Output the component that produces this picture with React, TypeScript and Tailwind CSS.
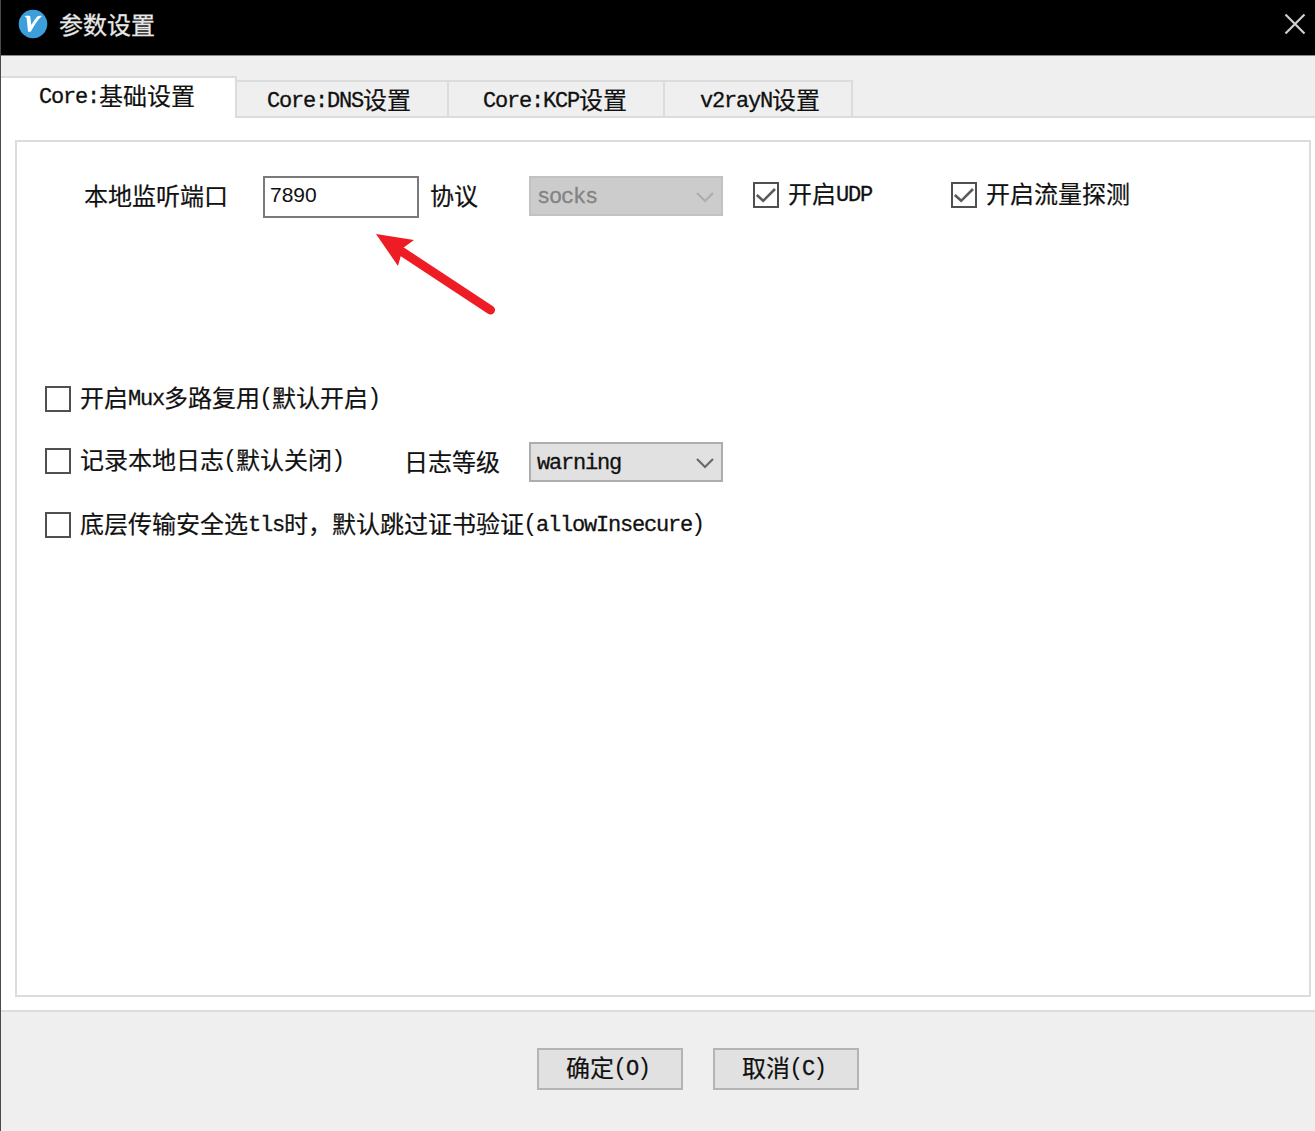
/**
 * Settings window - core, DNS, KCP and client options
 */

import React, { useState } from 'react';

const TABS = [
  { id: 'core', label: 'Core:基础设置', className: 'w-[213px] pl-[32px]' },
  { id: 'dns', label: 'Core:DNS设置', className: 'w-[212px] pl-[30px]' },
  { id: 'kcp', label: 'Core:KCP设置', className: 'w-[216px] pl-[34px]' },
  { id: 'app', label: 'v2rayN设置', className: 'w-[188px] pl-[35px]' },
];

const runClass = (run: string) => {
  if (/^[()]/.test(run)) return 'text-[24px] tracking-[-2.4px] -ml-[1px] mr-[1px]';
  if (/^[\x21-\x7e]/.test(run)) return 'relative top-[1px] text-[22px] tracking-[-1.2px] [-webkit-text-stroke:0.3px]';
  return 'relative top-[2px] [-webkit-text-stroke:0.2px]';
};

// Latin runs take exactly half the width of a Chinese character
const Label: React.FC<{ text: string; className?: string }> = ({ text, className = '' }) => (
  <span className={`flex items-center h-6 text-2xl leading-6 whitespace-nowrap ${className}`}>
    {text.split(/([()]|[\x21-\x27\x2a-\x7e]+)/).filter(Boolean).map((run, i) => (
      <span key={i} className={runClass(run)}>
        {run}
      </span>
    ))}
  </span>
);

interface CheckBoxProps {
  label: string;
  defaultChecked?: boolean;
  className?: string;
}

const CheckBox: React.FC<CheckBoxProps> = ({ label, defaultChecked = false, className = '' }) => {
  const [checked, setChecked] = useState(defaultChecked);

  return (
    <button
      type="button"
      role="checkbox"
      aria-checked={checked}
      onClick={() => setChecked(!checked)}
      className={`flex items-center shrink-0 gap-[9px] ${className}`}
    >
      <span className="w-[26px] h-[26px] shrink-0 border-2 border-[#505050] bg-white">
        {checked && (
          <svg viewBox="0 0 22 22" className="w-[22px] h-[22px]" fill="none" stroke="#5a5a5a" strokeWidth="2.6">
            <path d="M1.8 11 8.2 16.8 20 5" />
          </svg>
        )}
      </span>
      <Label text={label} />
    </button>
  );
};

const Combo: React.FC<{ value: string; disabled?: boolean; className?: string }> = ({ value, disabled, className = '' }) => (
  <button
    type="button"
    disabled={disabled}
    className={`flex items-center justify-between shrink-0 w-[194px] h-[40px] border-2 pl-[6px] pr-[6px] ${
      disabled ? 'bg-[#cccccc] border-[#c2c2c2] text-[#838383]' : 'bg-[#e1e1e1] border-[#adadad] text-[#111]'
    } ${className}`}
  >
    <Label text={value} className="pt-[2px]" />
    <svg viewBox="0 0 20 12" className="w-[20px] h-[12px] mt-[2px]" fill="none" stroke={disabled ? '#adadad' : '#6a6a6a'} strokeWidth="2.2">
      <path d="M2 2 10 10 18 2" />
    </svg>
  </button>
);

const DialogButton: React.FC<{ label: string }> = ({ label }) => (
  <button type="button" className="flex items-start w-[146px] h-[42px] pt-[7px] pl-[27px] bg-[#e1e1e1] border-2 border-[#b4b4b4]">
    <Label text={label} />
  </button>
);

export default function App() {
  const [tab, setTab] = useState('core');
  const [port, setPort] = useState('7890');

  return (
    <div className="relative flex flex-col w-[1315px] h-[1131px] overflow-hidden bg-[#efefef] border-l border-[#4a4a4a] text-[#111] font-['Liberation_Mono','Noto_Sans_CJK_SC',monospace]">
      {/* Title bar */}
      <div className="flex items-center justify-between h-[56px] pl-[17px] pr-[7px] pb-[7px] bg-black border-b border-[#8a8a8a] -ml-px">
        <div className="flex items-center gap-[11px] pl-px">
          <svg viewBox="0 0 30 30" className="w-[30px] h-[30px]">
            <circle cx="15" cy="15" r="14.3" fill="#3b9fdb" />
            <path d="M6.5 7.2 C8.5 6.7 11.5 6.7 12.2 7.3 L13.3 16 C16 11.5 18 8.5 19.3 7.4 C20.5 6.5 22.8 6.6 24 7 C20 10.3 15.8 17.3 12.7 22.8 L10 22.8 L8.7 9.5 C8.5 8.2 7.6 7.8 6.5 7.2Z" fill="#fff" />
          </svg>
          <h1 className="text-2xl leading-6 text-[#e8e8e8] [-webkit-text-stroke:0.3px] font-['Noto_Sans_CJK_SC',sans-serif]">参数设置</h1>
        </div>
        <button type="button" aria-label="close" className="pr-[2px]">
          <svg viewBox="0 0 22 22" className="w-[22px] h-[22px]" stroke="#d0d0d0" strokeWidth="2.2">
            <path d="M1.5 1.5 20.5 20.5M20.5 1.5 1.5 20.5" />
          </svg>
        </button>
      </div>

      {/* Tabs */}
      <div className="flex items-end shrink-0 h-[62px] border-b-2 border-[#dcdcdc]">
        {TABS.map((t) => (
          <button
            key={t.id}
            type="button"
            onClick={() => setTab(t.id)}
            className={`flex items-start shrink-0 box-border border-[#dcdcdc] ${
              t.id === tab
                ? 'h-[42px] -mb-[2px] bg-white border-t-2 border-r-2 pt-[7px] w-[236px] pl-[38px]'
                : `h-[36px] border-t-2 border-r-2 pt-[7px] ${t.className}`
            }`}
          >
            <Label text={t.label} />
          </button>
        ))}
      </div>

      {/* Tab page */}
      <div className="shrink-0 h-[894px] bg-white border-b-2 border-[#dcdcdc] pl-[14px] pr-[4px] pt-[22px] pb-[13px]">
        <div className="h-[857px] border-2 border-[#dcdcdc]">
          <div className="flex items-start h-[210px] pt-[34px] pl-[67px]">
            <Label text="本地监听端口" className="mt-[9px] w-[179px] shrink-0" />
            <input
              value={port}
              onChange={(e) => setPort(e.target.value)}
              className="w-[156px] h-[42px] shrink-0 border-2 border-[#7a7a7a] pl-[5px] pb-[4px] text-[21px] font-['Liberation_Sans',sans-serif] outline-none"
            />
            <Label text="协议" className="mt-[9px] ml-[11px] w-[99px] shrink-0" />
            <Combo value="socks" disabled />
            <CheckBox label="开启UDP" defaultChecked className="mt-[6px] ml-[30px] w-[198px]" />
            <CheckBox label="开启流量探测" defaultChecked className="mt-[6px]" />
          </div>

          <div className="flex flex-col pl-[28px]">
            <div className="flex items-center h-[94px]">
              <CheckBox label="开启Mux多路复用(默认开启)" />
            </div>
            <div className="flex items-start h-[66px] -mt-[4px]">
              <CheckBox label="记录本地日志(默认关闭)" className="mt-[6px] w-[359px]" />
              <Label text="日志等级" className="mt-[9px] w-[125px] shrink-0" />
              <Combo value="warning" />
            </div>
            <CheckBox label="底层传输安全选tls时，默认跳过证书验证(allowInsecure)" className="mt-[4px]" />
          </div>
        </div>
      </div>

      {/* Actions */}
      <div className="flex pl-[536px] pt-[36px] gap-[30px]">
        <DialogButton label="确定(O)" />
        <DialogButton label="取消(C)" />
      </div>

      {/* Pointer arrow over the port field */}
      <svg viewBox="0 0 124 88" className="absolute left-[373px] top-[230px] w-[124px] h-[88px] pointer-events-none">
        <path d="M27 21 116.5 80" stroke="#ee1c25" strokeWidth="9" strokeLinecap="round" />
        <path d="M2 4 40 10 29 18 24 36Z" fill="#ee1c25" />
      </svg>
    </div>
  );
}
